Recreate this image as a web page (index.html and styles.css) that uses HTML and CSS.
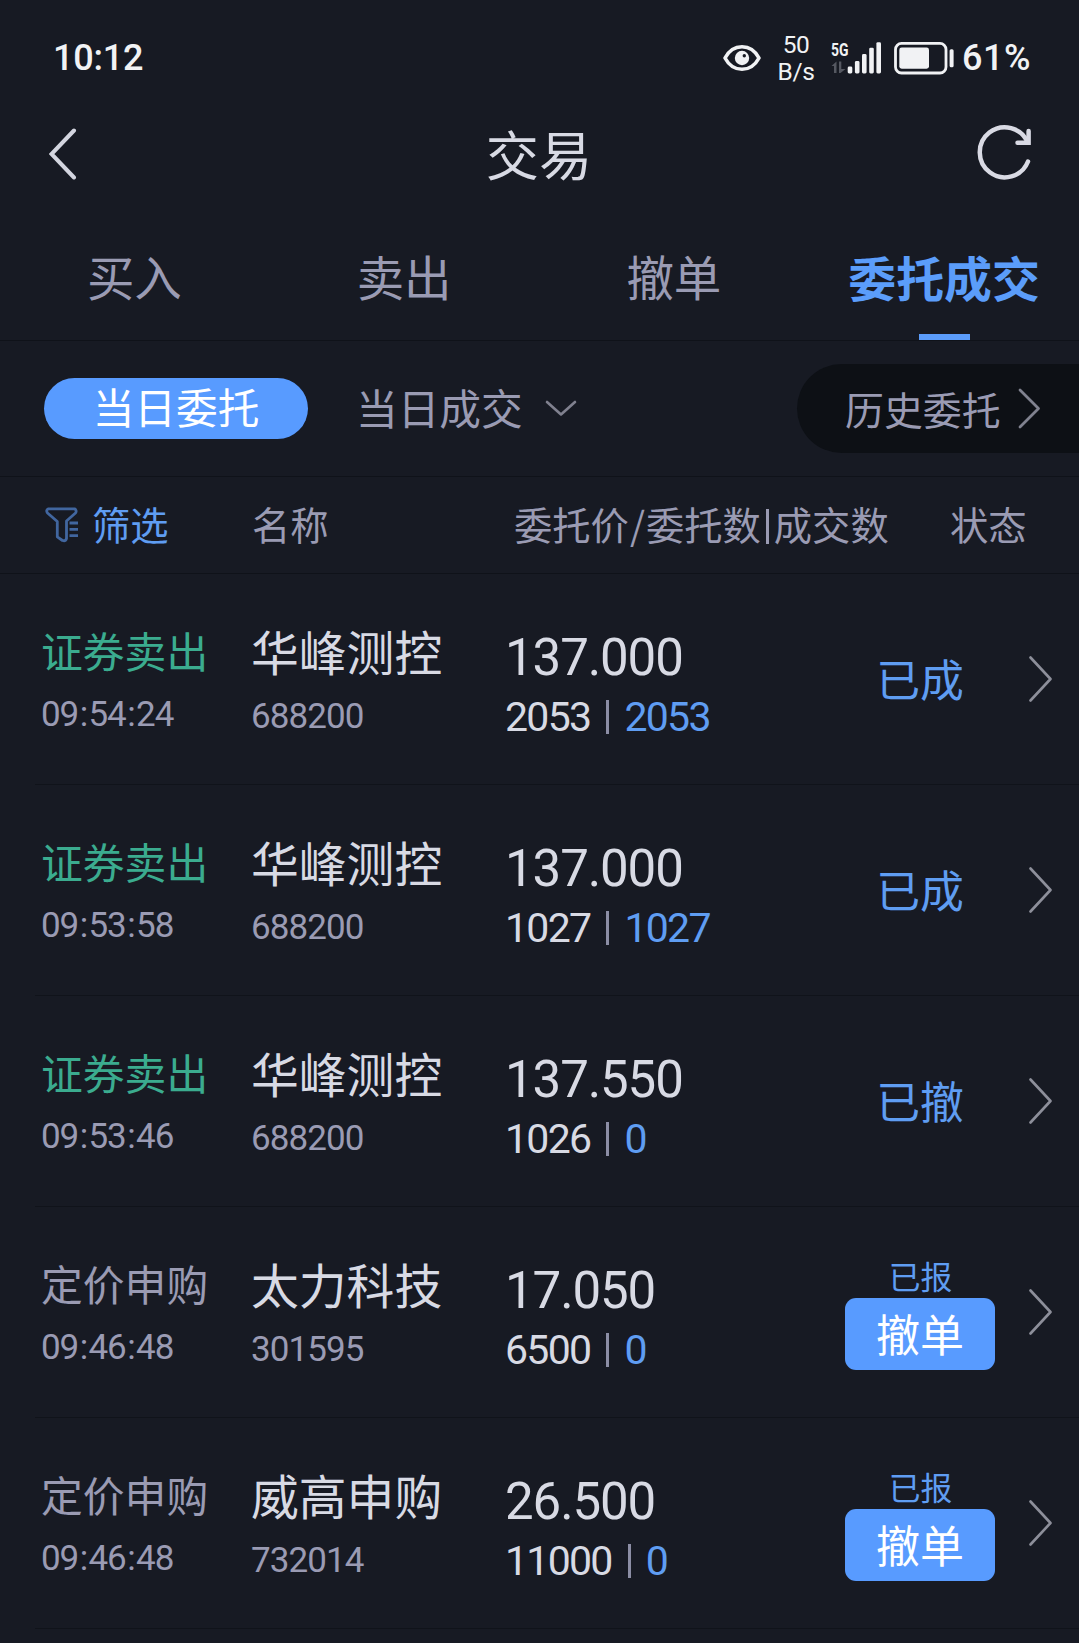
FILE: index.html
```html
<!DOCTYPE html>
<html lang="zh-CN">
<head>
<meta charset="utf-8">
<title>交易</title>
<link rel="stylesheet" href="styles.css">
</head>
<body>
<div class="statusbar">
  <span class="clock">10:12</span>
  <svg class="eye" width="40" height="28" viewBox="0 0 40 28"><path d="M3 14C11 -1 29 -1 37 14C29 29 11 29 3 14Z" fill="none" stroke="#f1f2f4" stroke-width="3.6" stroke-linejoin="round"/><circle cx="20" cy="14" r="7.2" fill="#f1f2f4"/><circle cx="22.3" cy="11.8" r="1.7" fill="#171a23"/></svg>
  <span class="speed"><span>50</span><span>B/s</span></span>
  <svg class="signal" width="54" height="44" viewBox="-2 -5 54 44"><text x="0" y="15" class="net" textLength="17.5" lengthAdjust="spacingAndGlyphs">5G</text><path d="M0.5 25L5.5 20.5V32H3V25ZM8 20.5H10.3V28H14.5L9.5 32H8Z" fill="#555861"/><g fill="#f1f2f4"><rect x="16.7" y="25.5" width="4.6" height="7" rx="1.4"/><rect x="23.9" y="20" width="4.6" height="12.5" rx="1.4"/><rect x="31" y="13" width="4.6" height="19.5" rx="1.4"/><rect x="38.2" y="6.7" width="4.6" height="25.8" rx="1.4"/><rect x="45.4" y="1.2" width="4.6" height="31.3" rx="1.4"/></g></svg>
  <svg class="battery" width="60" height="34" viewBox="0 0 60 34"><rect x="1.5" y="2.4" width="50.5" height="29.6" rx="6" fill="none" stroke="#f1f2f4" stroke-width="2.8"/><rect x="5.3" y="6.5" width="29.7" height="21.2" rx="2.4" fill="#f1f2f4"/><rect x="55.6" y="8.2" width="4" height="18" rx="1.5" fill="#f1f2f4"/></svg>
  <span class="percent">61%</span>
</div>

<header class="titlebar">
  <svg width="28" height="52" viewBox="0 0 28 52"><path d="M25 2.5L2.5 26L25 49.5" fill="none" stroke="#d3d5df" stroke-width="4" stroke-linecap="round"/></svg>
  <h1>交易</h1>
  <svg class="refresh" width="56" height="58" viewBox="0 0 56 58"><path d="M51 37.5A25 25 0 1 1 50.8 18.6" fill="none" stroke="#d9dae4" stroke-width="4.5" stroke-linecap="round"/><path d="M51.6 7V18.8H40.5" fill="none" stroke="#d9dae4" stroke-width="4.5" stroke-linecap="round" stroke-linejoin="miter"/></svg>
</header>

<nav class="tabs">
  <a>买入</a><a>卖出</a><a>撤单</a><a class="active">委托成交</a>
</nav>

<div class="filters">
  <span class="pill">当日委托</span>
  <span class="choice">当日成交</span>
  <svg class="down" width="32" height="18" viewBox="0 0 32 18"><path d="M2 2L16 14.5L30 2" fill="none" stroke="#80818f" stroke-width="2.6" stroke-linecap="round" stroke-linejoin="round"/></svg>
  <span class="history"><span>历史委托</span><svg width="23" height="42" viewBox="0 0 23 42"><path d="M2 2L20.5 20.5L2 39" fill="none" stroke="#80828f" stroke-width="2.8" stroke-linecap="round" stroke-linejoin="round"/></svg></span>
</div>

<div class="columns">
  <span class="sift"><svg width="34" height="36" viewBox="0 0 34 36"><g fill="none" stroke="#41669f" stroke-width="2.8" stroke-linejoin="round"><path d="M3.5 1.8H29.5Q32.2 3.5 30.5 6L21.5 14V31.5Q20.5 34.5 17.5 33.5L12.3 29.8V14.5L2.5 6Q0.5 3.2 3.5 1.8Z"/><path d="M24.5 16H33M24.5 22.3H33M24.5 28.6H33"/></g></svg><span>筛选</span></span>
  <span>名称</span>
  <span class="amount">委托价<i class="slash">/</i>委托数<i class="bar"></i>成交数</span>
  <span class="state-title">状态</span>
</div>

<main>
  <div class="row">
    <div class="kind"><span class="label sell">证券卖出</span><span class="num">09<i>:</i>54<i>:</i>24</span></div>
    <div class="stock"><span class="name">华峰测控</span><span class="num">688200</span></div>
    <div class="deal"><span class="price">137.000</span><span class="qty">2053<i></i><b>2053</b></span></div>
    <div class="state"><span class="done">已成</span></div>
    <svg class="go" width="24" height="46" viewBox="0 0 24 46"><path d="M1.5 1.5L21.5 23L1.5 44.5" /></svg>
  </div>
  <div class="row">
    <div class="kind"><span class="label sell">证券卖出</span><span class="num">09<i>:</i>53<i>:</i>58</span></div>
    <div class="stock"><span class="name">华峰测控</span><span class="num">688200</span></div>
    <div class="deal"><span class="price">137.000</span><span class="qty">1027<i></i><b>1027</b></span></div>
    <div class="state"><span class="done">已成</span></div>
    <svg class="go" width="24" height="46" viewBox="0 0 24 46"><path d="M1.5 1.5L21.5 23L1.5 44.5" /></svg>
  </div>
  <div class="row">
    <div class="kind"><span class="label sell">证券卖出</span><span class="num">09<i>:</i>53<i>:</i>46</span></div>
    <div class="stock"><span class="name">华峰测控</span><span class="num">688200</span></div>
    <div class="deal"><span class="price">137.550</span><span class="qty">1026<i></i><b>0</b></span></div>
    <div class="state"><span class="done">已撤</span></div>
    <svg class="go" width="24" height="46" viewBox="0 0 24 46"><path d="M1.5 1.5L21.5 23L1.5 44.5" /></svg>
  </div>
  <div class="row">
    <div class="kind"><span class="label">定价申购</span><span class="num">09<i>:</i>46<i>:</i>48</span></div>
    <div class="stock"><span class="name">太力科技</span><span class="num">301595</span></div>
    <div class="deal"><span class="price">17.050</span><span class="qty">6500<i></i><b>0</b></span></div>
    <div class="state"><span class="sent">已报</span><button class="cancel">撤单</button></div>
    <svg class="go" width="24" height="46" viewBox="0 0 24 46"><path d="M1.5 1.5L21.5 23L1.5 44.5" /></svg>
  </div>
  <div class="row">
    <div class="kind"><span class="label">定价申购</span><span class="num">09<i>:</i>46<i>:</i>48</span></div>
    <div class="stock"><span class="name">威高申购</span><span class="num">732014</span></div>
    <div class="deal"><span class="price">26.500</span><span class="qty">11000<i></i><b>0</b></span></div>
    <div class="state"><span class="sent">已报</span><button class="cancel">撤单</button></div>
    <svg class="go" width="24" height="46" viewBox="0 0 24 46"><path d="M1.5 1.5L21.5 23L1.5 44.5" /></svg>
  </div>
</main>
</body>
</html>
```
FILE: styles.css
```css
* { box-sizing: border-box; }
body {
  margin: 0;
  width: 1079px;
  height: 1643px;
  overflow: hidden;
  background: #171a23;
  color: #9a9bb3;
  font-family: "Noto Sans CJK SC", sans-serif;
}
i, b { font-style: normal; font-weight: inherit; }
svg { display: block; flex: none; }

.statusbar {
  display: flex;
  align-items: center;
  height: 110px;
  padding: 5px 47px 0 53px;
  color: #f1f2f4;
  font-family: Roboto, sans-serif;
  font-size: 36px;
  font-weight: 500;
  line-height: 40px;
}
.clock { margin-right: auto; letter-spacing: -0.2px; }
.eye { margin-right: 16px; }
.speed {
  display: flex;
  flex-direction: column;
  align-items: center;
  width: 36px;
  margin-right: 15px;
  font-size: 24.5px;
  font-weight: 400;
  line-height: 27px;
  letter-spacing: -0.4px;
}
.signal { margin-right: 11px; }
.net { font: 700 19px Roboto, sans-serif; fill: #f1f2f4; }
.battery { margin-right: 8px; }
.percent { width: 70px; letter-spacing: 0.5px; }

.titlebar {
  display: flex;
  align-items: center;
  justify-content: space-between;
  height: 88px;
  padding: 0 46px 0 49px;
}
.titlebar h1 {
  margin: -3px 0 0 24px;
  color: #d8dae4;
  font-size: 53.2px;
  font-weight: 400;
  line-height: 70px;
}
.refresh { margin-top: -2px; }

.tabs {
  display: grid;
  grid-template-columns: repeat(4, 1fr);
  height: 143px;
  padding-top: 48px;
  border-bottom: 1px solid #0f1219;
}
.tabs a {
  display: flex;
  flex-direction: column;
  align-items: center;
  justify-content: space-between;
  margin-left: -1px;
  font-size: 47.5px;
  line-height: 60px;
}
.tabs .active { margin-left: 0; color: #5b9dfa; font-size: 47.9px; font-weight: 700; }
.tabs .active::after { content: ""; width: 51px; height: 6px; background: #5b9cfa; }

.filters {
  display: flex;
  align-items: center;
  height: 136px;
  padding-left: 44px;
  border-bottom: 1px solid #0f1219;
  font-size: 41.7px;
}
.pill {
  width: 264px;
  height: 61px;
  border-radius: 31px;
  background: #589bff;
  color: #fff;
  line-height: 56px;
  text-align: center;
}
.choice { margin-left: 48px; line-height: 54px; padding-bottom: 4px; }
.down { margin-left: 22px; }
.history {
  display: flex;
  align-items: center;
  width: 282px;
  height: 89px;
  margin-left: auto;
  padding-left: 48px;
  border-radius: 45px 0 0 45px;
  background: #0d1015;
  font-size: 38.9px;
}
.history span { line-height: 50px; padding-bottom: 2px; }
.history svg { margin-left: 17px; }

.columns {
  display: grid;
  grid-template-columns: 208px 262px 436px 1fr;
  align-items: center;
  height: 97px;
  padding: 0 0 2px 44px;
  border-bottom: 1px solid #0f1219;
  font-size: 38.3px;
  line-height: 50px;
  white-space: nowrap;
}
.sift { display: flex; align-items: center; gap: 13px; color: #5f9df2; }
.sift svg { margin: 1px 0 0 1px; }
.slash, .bar { display: inline-block; text-align: center; }
.slash { width: 17px; }
.bar { width: 3px; height: 35px; margin: 0 5px; background: #9a9bb3; vertical-align: -4px; }

.row {
  display: grid;
  grid-template-columns: 216px 254px 340px 150px 1fr;
  height: 211px;
  margin-left: 35px;
  border-bottom: 1px solid #10131a;
}
.row > div { display: flex; flex-direction: column; white-space: nowrap; }
.kind { padding: 51px 0 0 6px; gap: 20px; }
.label { font-size: 41.8px; line-height: 50px; }
.sell { color: #3bac8f; }
.num {
  font-family: Roboto, sans-serif;
  font-size: 35px;
  line-height: 40px;
  letter-spacing: -0.9px;
}
.kind .num { letter-spacing: -1.1px; }
.num i { margin: 0 1.5px; }
.stock { padding-top: 52px; gap: 21px; }
.name { color: #d8dae4; font-size: 47.8px; line-height: 50px; }
.deal {
  padding-top: 59px;
  gap: 14px;
  color: #d8dae4;
  font-family: Roboto, sans-serif;
}
.price { font-size: 51px; line-height: 50px; letter-spacing: -1.1px; }
.qty {
  display: flex;
  align-items: center;
  font-size: 41px;
  line-height: 40px;
  letter-spacing: -1.7px;
}
.qty i { width: 3px; height: 34px; margin: 0 15px 0 16px; background: #8c8ea5; }
.qty b { color: #5f9df2; }
.state { align-items: center; padding-top: 52px; }
.done { color: #5f9df2; font-size: 43.8px; line-height: 50px; margin-top: 27px; }
.sent { color: #5f9df2; font-size: 31.8px; line-height: 32px; margin-left: 1px; }
.cancel {
  width: 150px;
  height: 72px;
  margin-top: 7px;
  padding: 0 0 3px;
  border: 0;
  border-radius: 11px;
  background: #589bff;
  color: #fff;
  font: 44px/66px "Noto Sans CJK SC", sans-serif;
}
.go { margin: 82px 0 0 34px; fill: none; stroke: #8d8f9a; stroke-width: 2.6; stroke-linecap: round; stroke-linejoin: round; }
```
